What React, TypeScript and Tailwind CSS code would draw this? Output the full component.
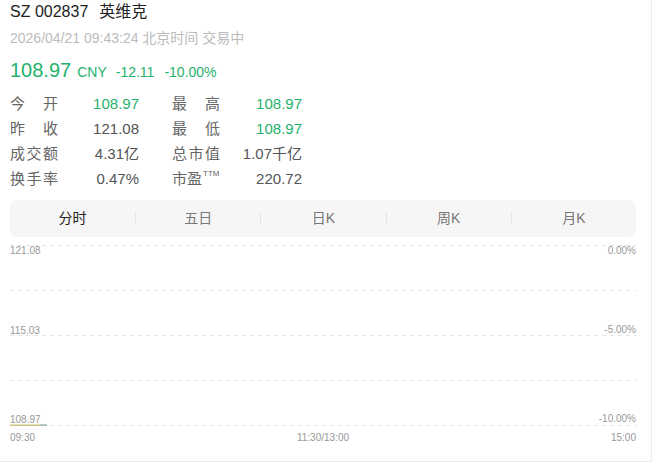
import React from "react";

const green = "text-[#1fb26c]";

type Cell = { label: string[]; value: string; up?: boolean; sup?: string };

const rows: [Cell, Cell][] = [
  [
    { label: ["今", "开"], value: "108.97", up: true },
    { label: ["最", "高"], value: "108.97", up: true },
  ],
  [
    { label: ["昨", "收"], value: "121.08" },
    { label: ["最", "低"], value: "108.97", up: true },
  ],
  [
    { label: ["成", "交", "额"], value: "4.31亿" },
    { label: ["总", "市", "值"], value: "1.07千亿" },
  ],
  [
    { label: ["换", "手", "率"], value: "0.47%" },
    { label: ["市", "盈"], value: "220.72", sup: "TTM" },
  ],
];

const tabs = ["分时", "五日", "日K", "周K", "月K"];

function Label({ cell }: { cell: Cell }) {
  if (cell.sup) {
    return (
      <div className="w-[48px] flex items-start text-[#666]">
        {cell.label.join("")}
        <span className="text-[8px] leading-[10px] ml-[1px] mt-[3px]">{cell.sup}</span>
      </div>
    );
  }
  return (
    <div className="w-[48px] flex justify-between text-[#666]">
      {cell.label.map((c, i) => (
        <span key={i}>{c}</span>
      ))}
    </div>
  );
}

function Chart() {
  const lines = [0.5, 45.5, 90.5, 135.5, 180.5];
  return (
    <div className="relative h-[181px] mt-[8px] text-[10px] leading-[12px] text-[#999]">
      <svg width="626" height="181" className="absolute inset-0">
        {lines.map((y) => (
          <line key={y} x1="0" x2="626" y1={y} y2={y} stroke="#e2e2e2" strokeDasharray="4 4" />
        ))}
        <line x1="0" x2="37" y1="180.5" y2="180.5" stroke="#c9c27a" strokeWidth="2" />
        <line x1="30" x2="37" y1="180.5" y2="180.5" stroke="#9fb8c8" strokeWidth="2" />
      </svg>
      <span className="absolute left-0 top-[0px]">121.08</span>
      <span className="absolute right-0 top-[0px]">0.00%</span>
      <span className="absolute left-0 top-[80px]">115.03</span>
      <span className="absolute right-0 top-[79px]">-5.00%</span>
      <span className="absolute left-0 top-[169px]">108.97</span>
      <span className="absolute right-0 top-[168px]">-10.00%</span>
    </div>
  );
}

export default function App() {
  return (
    <div className="w-[652px] h-[462px] bg-white border-r border-b border-[#ececec] font-['Liberation_Sans','Noto_Sans_CJK_SC',sans-serif]">
      <div className="px-[10px] w-[646px]">
        <div className="pt-[2px] text-[16px] leading-[20px] text-[#222] flex">
          <span>SZ 002837</span>
          <span className="ml-[11px]">英维克</span>
        </div>
        <div className="mt-[6px] text-[14px] leading-[20px] text-[#bbb]">
          2026/04/21 09:43:24 北京时间 交易中
        </div>
        <div className={`mt-[10px] flex items-baseline leading-[24px] ${green}`}>
          <span className="text-[20px]">108.97</span>
          <span className="text-[14px] ml-[6px]">CNY</span>
          <span className="text-[14px] ml-[9px]">-12.11</span>
          <span className="text-[14px] ml-[10px]">-10.00%</span>
        </div>
        <div className="mt-[7px] text-[15px]">
          {rows.map(([a, b], i) => (
            <div key={i} className="flex items-center h-[25px] leading-[25px]">
              <Label cell={a} />
              <div className={`w-[81px] text-right ${a.up ? green : "text-[#555]"}`}>{a.value}</div>
              <div className="ml-[33px]">
                <Label cell={b} />
              </div>
              <div className={`w-[82px] text-right ${b.up ? green : "text-[#555]"}`}>{b.value}</div>
            </div>
          ))}
        </div>
        <div className="mt-[9px] h-[37px] rounded-[6px] bg-[#f6f6f6] flex items-center text-[14px]">
          {tabs.map((t, i) => (
            <div key={t} className="flex-1 flex items-center h-full relative">
              {i > 0 && <div className="w-px h-[12px] bg-[#e3e3e3]" />}
              <div className={`flex-1 text-center ${i === 0 ? "text-[#222]" : "text-[#777]"}`}>{t}</div>
            </div>
          ))}
        </div>
        <Chart />
        <div className="mt-[6px] flex justify-between text-[10px] leading-[12px] text-[#999]">
          <span>09:30</span>
          <span>11:30/13:00</span>
          <span>15:00</span>
        </div>
      </div>
    </div>
  );
}
